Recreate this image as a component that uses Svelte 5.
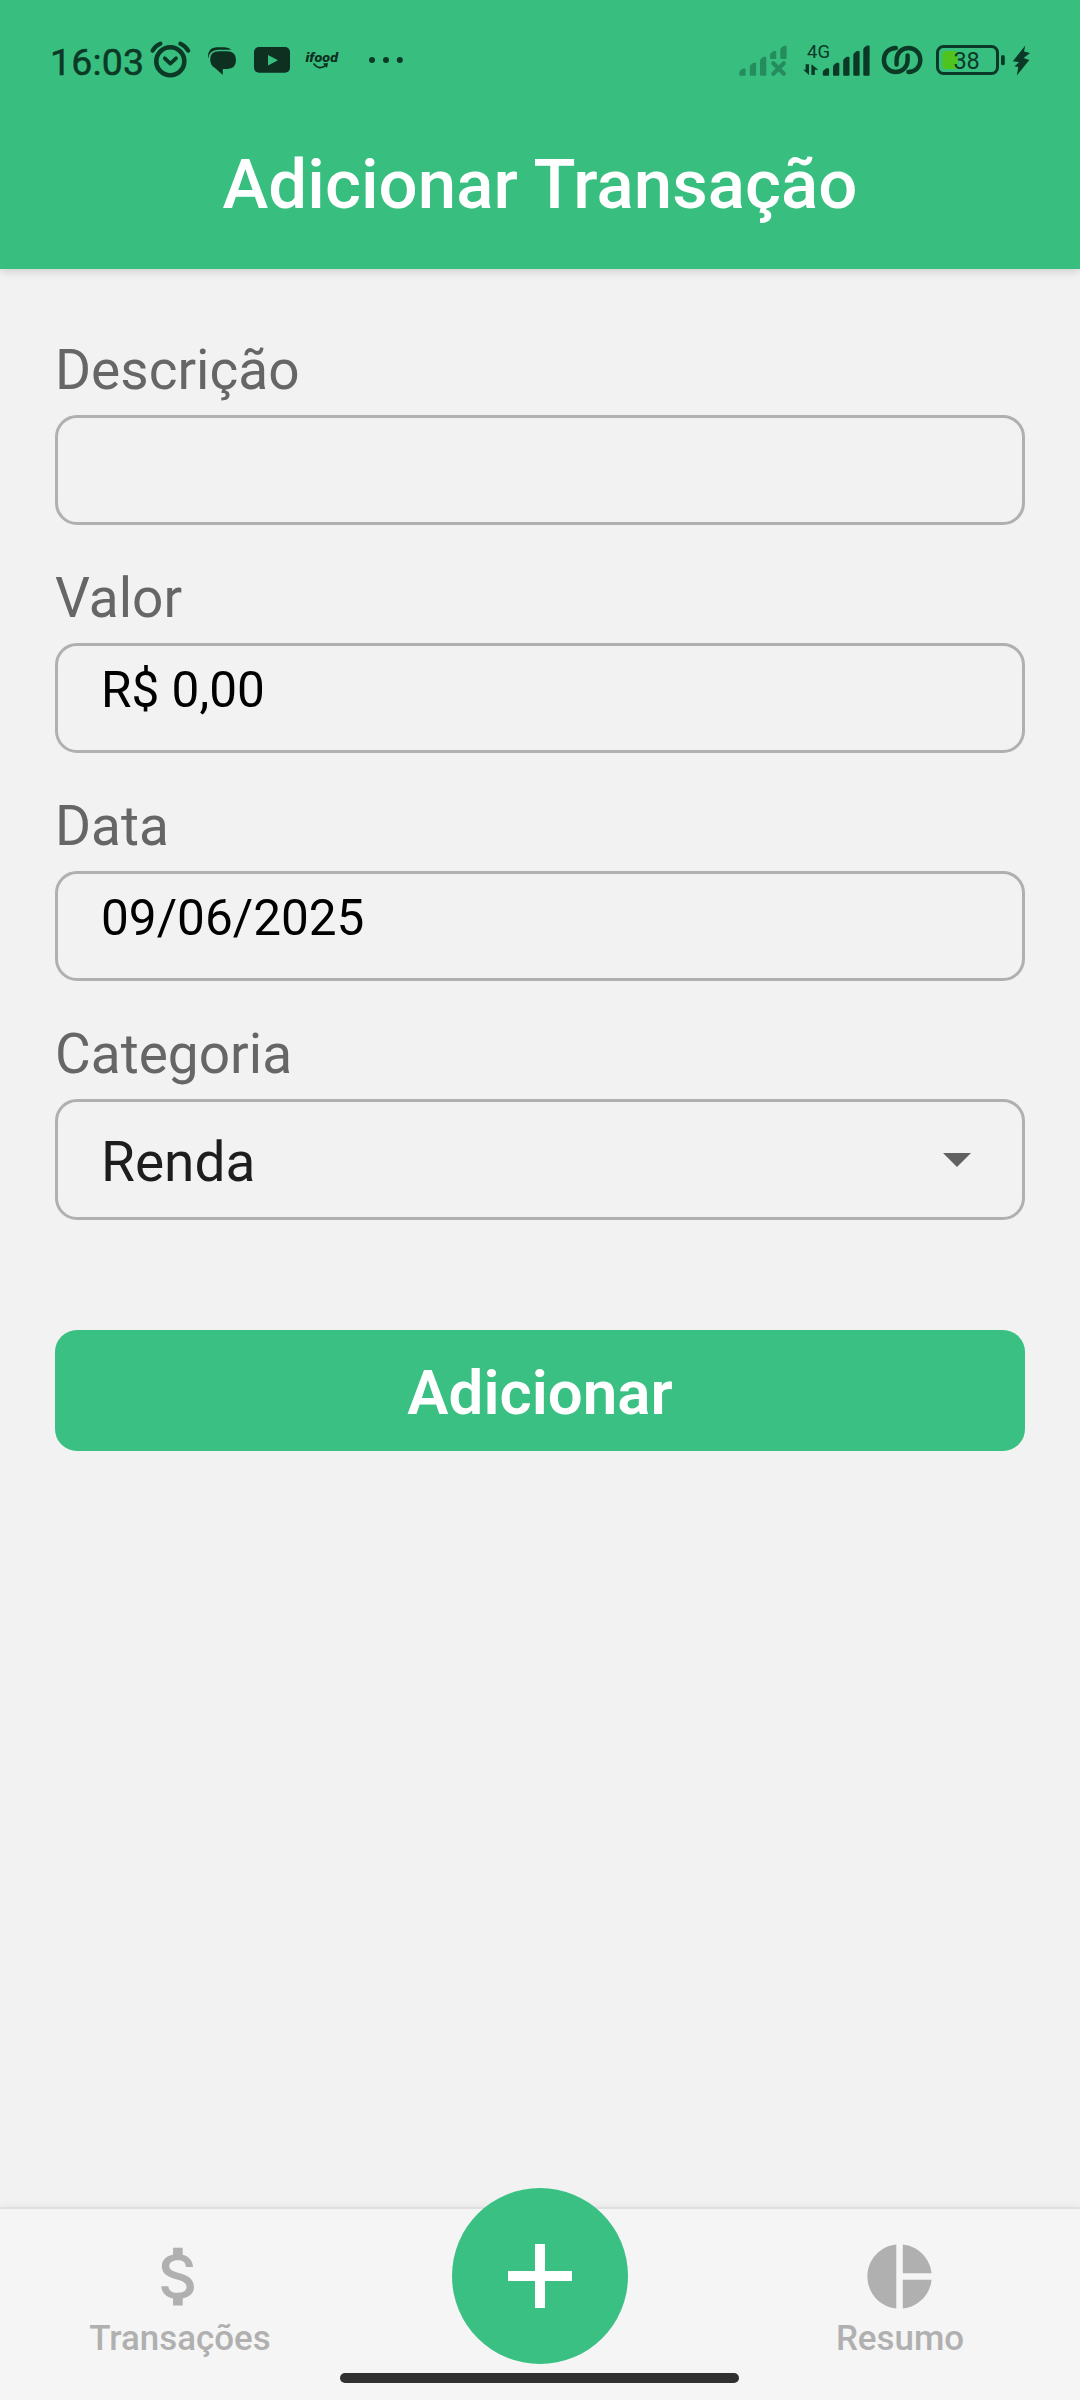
<script>
  let description = $state('');
  let amount = $state('R$ 0,00');
  let date = $state('09/06/2025');
  let category = $state('Renda');

  const weakBars = [
    [739.3, 68.5, 75.7],
    [749.8, 62.7, 75.7],
    [760, 56.7, 75.7],
    [770, 51, 59],
    [780.3, 45.7, 59]
  ];
  const strongBars = [
    [822.8, 68.3, 75.7],
    [833, 62.7, 75.7],
    [843.2, 56.7, 75.7],
    [853.3, 51, 75.7],
    [863.3, 45.5, 75.7]
  ];

  // A signal bar with a slanted top-left corner
  const bar = ([x, top, bottom]) =>
    `M${x} ${bottom - 1}V${top + 4}Q${x} ${top + 3} ${x + 1} ${top + 2}L${x + 3.5} ${top}H${x + 5.3}Q${x + 6.3} ${top} ${x + 6.3} ${top + 1}V${bottom - 1}Q${x + 6.3} ${bottom} ${x + 5.3} ${bottom}H${x + 1}Q${x} ${bottom} ${x} ${bottom - 1}Z`;
</script>

<div class="screen">
  <header>
    <div class="status">
      <div class="group">
        <span class="time">16:03</span>
        <svg width="50" height="80" viewBox="146 20 50 80" fill="none" stroke="#0b3925" stroke-linecap="round">
          <circle cx="170.3" cy="61.3" r="14" stroke-width="4.6" />
          <path d="M164.8 58.3L170.3 63.6L176 58.3" stroke-width="3.8" stroke-linejoin="round" />
          <path d="M152.6 50.6Q155 46 160.4 43.6M180.3 43.6Q185.5 46 188.2 50.6" stroke-width="4.2" />
        </svg>
        <svg width="50" height="80" viewBox="196 20 50 80" fill="#0d3021">
          <path d="M210.2 59.5Q210.2 51.2 219 51.2H227Q236 51.2 236 60T227 69H222.8V75L215 68Q210.2 65.3 210.2 59.5Z" />
          <path d="M208.4 58.5Q207.6 56 208.3 53.5Q210 47.2 217 47.2H224.5Q229 47.2 231.3 49.8H218Q209 50.2 208.4 58.5Z" />
        </svg>
        <svg width="52" height="80" viewBox="246 20 52 80">
          <rect x="254" y="47" width="36" height="25.7" rx="5" fill="#0d3021" />
          <path d="M268 55L278 60.3L268 65.6Z" fill="#38bf80" />
        </svg>
        <svg width="52" height="80" viewBox="298 20 52 80">
          <text class="brand" x="305.5" y="61.8" textLength="32.5" lengthAdjust="spacingAndGlyphs">ifood</text>
          <path d="M313.5 63.5Q319 70.8 326 65.4" fill="none" stroke="#0d3021" stroke-width="1.7" />
          <path d="M322.8 63.6L328 63L327 68Z" fill="#0d3021" />
        </svg>
        <svg width="60" height="80" viewBox="350 20 60 80" fill="#0b3925">
          <circle cx="372" cy="60" r="3" /><circle cx="386" cy="60" r="3" /><circle cx="399.8" cy="60" r="3" />
        </svg>
      </div>
      <div class="group">
        <svg width="64" height="80" viewBox="732 20 64 80">
          <g fill="#258c5d">
            {#each weakBars as b}<path d={bar(b)} />{/each}
          </g>
          <path d="M773.3 63.2L783.8 73.8M783.8 63.2L773.3 73.8" stroke="#258c5d" stroke-width="4.2" stroke-linecap="round" />
        </svg>
        <svg width="80" height="80" viewBox="796 20 80 80" fill="#0b3925">
          <text class="network" x="807" y="57.5">4G</text>
          <path d="M805.6 64.2H809V75L803.2 69.8H805.6ZM811.4 64.2L818.3 69.8H814.8V75H811.4Z" />
          {#each strongBars as b}<path d={bar(b)} />{/each}
        </svg>
        <svg width="54" height="80" viewBox="876 20 54 80" fill="none" stroke="#0b3925" stroke-width="4.4" stroke-linecap="round">
          <path d="M895.8 48C888.5 48.2 883.9 53.3 883.9 60.2S889.2 72 895.6 72C902.4 72 907.6 67 907.6 60V55.4" />
          <path d="M908.4 72C915.7 71.8 920.3 66.7 920.3 59.8S915 48 908.6 48C901.8 48 896.6 53 896.6 60V64.6" />
        </svg>
        <svg width="76" height="80" viewBox="930 20 76 80">
          <rect x="942.5" y="51" width="15" height="18" rx="2" fill="#4fc41f" />
          <rect x="937.5" y="46.5" width="60" height="27" rx="6" fill="none" stroke="#0b3925" stroke-width="3" />
          <rect x="1001" y="55" width="3.8" height="10.3" rx="1.9" fill="#0b3925" />
          <text class="charge" x="953.4" y="69.2">38</text>
        </svg>
        <svg width="30" height="80" viewBox="1006 20 30 80" fill="#0b3925">
          <path d="M1025.3 45.5L1012.8 61.2L1019 62.3L1014.5 66.2L1018.3 67L1016.8 75.5L1029.3 60L1023.6 58L1030 53L1024 51.6Z" />
        </svg>
      </div>
    </div>
    <h1>Adicionar Transação</h1>
  </header>

  <main>
    <label class="field">
      <span>Descrição</span>
      <input type="text" bind:value={description} />
    </label>
    <label class="field">
      <span>Valor</span>
      <input type="text" bind:value={amount} />
    </label>
    <label class="field">
      <span>Data</span>
      <input type="text" bind:value={date} />
    </label>
    <div class="field">
      <span>Categoria</span>
      <div class="select">
        <div class="value">{category}</div>
        <svg width="28" height="14" viewBox="0 0 28 14"><path d="M0 0H28L14 14Z" fill="#616161" /></svg>
      </div>
    </div>
    <button class="submit">Adicionar</button>
  </main>

  <nav>
    <div class="tab">
      <svg width="77" height="77" viewBox="0 0 24 24" fill="#b0b0b0">
        <path d="M11.8 10.9c-2.27-.59-3-1.2-3-2.15 0-1.09 1.01-1.85 2.7-1.85 1.78 0 2.44.85 2.5 2.1h2.21c-.07-1.72-1.12-3.3-3.21-3.81V3h-3v2.16c-1.94.42-3.5 1.68-3.5 3.61 0 2.31 1.91 3.46 4.7 4.13 2.5.6 3 1.48 3 2.41 0 .69-.49 1.79-2.7 1.79-2.06 0-2.87-.92-2.98-2.1h-2.2c.12 2.19 1.76 3.42 3.68 3.83V21h3v-2.15c1.95-.37 3.5-1.5 3.5-3.55 0-2.84-2.43-3.81-4.7-4.4z" />
      </svg>
      <span>Transações</span>
    </div>
    <div class="tab">
      <button class="add" aria-label="Adicionar">
        <svg width="64" height="64" viewBox="0 0 64 64" fill="#fff">
          <path d="M27 0H37V27H64V37H37V64H27V37H0V27H27Z" />
        </svg>
      </button>
    </div>
    <div class="tab">
      <svg width="77" height="77" viewBox="0 0 24 24" fill="#b0b0b0">
        <path d="M11 2v20c-5.07-.5-9-4.79-9-10s3.93-9.5 9-10zm2.03 0v8.99H22c-.47-4.74-4.24-8.52-8.97-8.99zm0 11.01V22c4.74-.47 8.5-4.25 8.97-8.99h-8.97z" />
      </svg>
      <span>Resumo</span>
    </div>
    <div class="home-bar"></div>
  </nav>
</div>

<style>
  :global(body) {
    margin: 0;
  }
  .screen {
    width: 1080px;
    height: 2400px;
    display: flex;
    flex-direction: column;
    background: #f2f2f2;
    font-family: Roboto, sans-serif;
    overflow: hidden;
  }
  svg {
    display: block;
    flex: none;
  }
  header {
    height: 269px;
    flex: none;
    background: #38bf80;
    box-shadow: 0 2px 9px rgba(0, 0, 0, 0.16);
  }
  .status {
    box-sizing: border-box;
    height: 104px;
    padding: 20px 44px 0 50px;
    display: flex;
    justify-content: space-between;
  }
  .group {
    display: flex;
    height: 80px;
  }
  .time {
    width: 96px;
    font-size: 37.5px;
    line-height: 84px;
    letter-spacing: 0.2px;
    color: #0b3925;
    -webkit-text-stroke: 0.5px #0b3925;
    white-space: nowrap;
  }
  .brand {
    font-size: 13.5px;
    font-weight: 900;
    font-style: italic;
    fill: #0d3021;
  }
  .network {
    font-size: 18.5px;
  }
  .charge {
    font-size: 23.5px;
    fill: #0b3925;
  }
  h1 {
    margin: 0;
    padding-top: 41px;
    text-align: center;
    font-size: 69px;
    font-weight: 500;
    line-height: 80px;
    letter-spacing: 0.05px;
    color: #fff;
  }
  main {
    flex: 1;
    padding: 69px 55px 0;
    display: flex;
    flex-direction: column;
    gap: 41px;
  }
  .field {
    display: flex;
    flex-direction: column;
    gap: 13px;
  }
  .field span {
    font-size: 55px;
    line-height: 64px;
    color: #666;
  }
  input,
  .select {
    box-sizing: border-box;
    width: 970px;
    border: 3px solid #b0b0b0;
    border-radius: 22px;
    background: transparent;
  }
  input {
    height: 110px;
    margin: 0;
    padding: 0 43px 16px;
    outline: none;
    font: 49.5px Roboto, sans-serif;
    color: #000;
  }
  .select {
    height: 121px;
    padding: 0 51px 0 43px;
    display: flex;
    align-items: center;
    justify-content: space-between;
    font-size: 55px;
    color: #1d1d1d;
  }
  .value {
    padding-top: 5px;
  }
  .submit {
    height: 121px;
    margin-top: 69px;
    padding: 5px 0 0;
    border: 0;
    border-radius: 22px;
    background: #3ac082;
    color: #fff;
    font: 600 61.8px Roboto, sans-serif;
  }
  nav {
    position: relative;
    box-sizing: border-box;
    height: 193px;
    flex: none;
    display: grid;
    grid-template-columns: repeat(3, 1fr);
    border-top: 2px solid #e0e0e0;
    background: #f5f5f5;
    box-shadow: 0 0 10px rgba(0, 0, 0, 0.07);
  }
  .tab {
    display: flex;
    flex-direction: column;
    align-items: center;
    padding-top: 29px;
  }
  .tab:not(:nth-child(2)) svg {
    margin-right: 1px;
  }
  .tab span {
    margin-top: 3px;
    font-size: 34.9px;
    font-weight: 500;
    line-height: 42px;
    color: #b0b0b0;
  }
  .add {
    width: 176px;
    height: 176px;
    margin-top: -50px;
    padding: 0;
    flex: none;
    display: grid;
    place-items: center;
    border: 0;
    border-radius: 50%;
    background: #3ac082;
  }
  .home-bar {
    position: absolute;
    left: 340px;
    bottom: 17px;
    width: 399px;
    height: 10px;
    border-radius: 5px;
    background: #303030;
  }
</style>
